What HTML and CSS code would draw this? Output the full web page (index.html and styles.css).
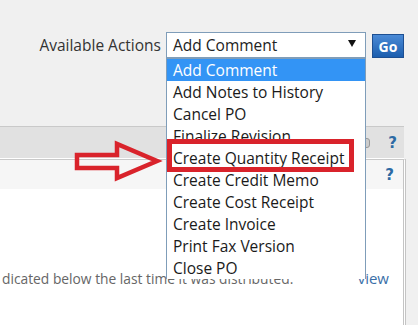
FILE: index.html
```html
<!DOCTYPE html>
<html lang="en">
<head>
    <meta charset="UTF-8">
    <title>Purchase Order</title>
    <link rel="stylesheet" href="styles.css">
</head>
<body>
    <div class="toolbar">
        <span class="toolbar-label">Available Actions</span>
        <div class="action-select">
            <span class="select-value">Add Comment</span>
            <span class="select-caret"></span>
            <ul class="select-list">
                <li class="active">Add Comment</li>
                <li>Add Notes to History</li>
                <li>Cancel PO</li>
                <li>Finalize Revision</li>
                <li>Create Quantity Receipt</li>
                <li>Create Credit Memo</li>
                <li>Create Cost Receipt</li>
                <li>Create Invoice</li>
                <li>Print Fax Version</li>
                <li>Close PO</li>
            </ul>
        </div>
        <button class="go-btn">Go</button>
    </div>

    <div class="panel">
        <div class="panel-head">
            <span class="clip-icon"></span>
            <span class="help">?</span>
        </div>
        <div class="panel-body">
            <div class="body-row">
                <span class="help">?</span>
            </div>
            <div class="notice">
                <span>dicated below the last time it was distributed.</span>
                <a class="view-link">view</a>
            </div>
        </div>
    </div>

    <svg class="callout-arrow" width="92" height="48" viewBox="0 0 92 48">
        <path d="M5 17 H45 V6 L85 23 L45 40 V30 H5 Z" fill="none" stroke="#d9232b" stroke-width="4.5" stroke-linejoin="miter"/>
    </svg>
    <div class="callout-box"></div>
</body>
</html>
```

FILE: styles.css
```css
body {
    margin: 0;
    height: 325px;
    background: #f0f0f0;
    font-family: "Open Sans", "Noto Sans", sans-serif;
    color: #222;
    overflow: hidden;
}

.toolbar {
    height: 126px;
    box-sizing: border-box;
    padding: 32px 14px 0 0;
    display: flex;
    justify-content: flex-end;
    align-items: flex-start;
}
.toolbar-label {
    font-size: 15.5px;
    color: #333;
    line-height: 26px;
    margin-right: 5px;
}

.action-select {
    position: relative;
    width: 200px;
    height: 26px;
    box-sizing: border-box;
    border: 1px solid #7f9db9;
    background: #fff;
    display: flex;
    align-items: center;
    padding-left: 6px;
    margin-right: 6px;
}
.select-value {
    font-size: 15.5px;
    flex: 1;
}
.select-caret {
    width: 0;
    height: 0;
    border-left: 4px solid transparent;
    border-right: 4px solid transparent;
    border-top: 7px solid #111;
    margin-right: 9px;
    margin-top: -4px;
}
.select-list {
    position: absolute;
    left: -1px;
    top: 25px;
    width: 200px;
    height: 221px;
    box-sizing: border-box;
    margin: 0;
    padding: 0;
    list-style: none;
    background: #fff;
    border: 1px solid #7f9db9;
    border-bottom: none;
    z-index: 2;
    overflow: hidden;
}
.select-list li {
    height: 22px;
    line-height: 22px;
    padding-left: 6px;
    font-size: 15.5px;
    color: #1a1a1a;
}
.select-list li.active {
    background: #3394f5;
    color: #fff;
}

.go-btn {
    width: 32px;
    height: 24px;
    margin-top: 2px;
    padding: 0;
    border: 1px solid #1d4f92;
    background: linear-gradient(#4a8ad6, #1c5eae);
    color: #fff;
    font-family: "Open Sans", sans-serif;
    font-weight: bold;
    font-size: 14px;
}

.panel {
    margin-right: 14px;
    border-top: 1px solid #c9c9c9;
}
.panel-head {
    height: 31px;
    background: #e1e1e1;
    border-bottom: 1px solid #fff;
    display: flex;
    align-items: center;
    justify-content: flex-end;
    padding-right: 7px;
}
.clip-icon {
    width: 5px;
    height: 8px;
    border: 1px solid #999;
    border-radius: 3px;
    background: #ccc;
    margin-right: 18px;
}
.help {
    color: #2c6aa4;
    font-weight: bold;
    font-size: 15px;
    font-family: "DejaVu Sans", sans-serif;
}

.panel-body {
    background: #fff;
    border-top: 1px solid #c9c9c9;
    border-right: 3px double #c4c4c4;
    margin-right: -2px;
    height: 165px;
}
.body-row {
    height: 29px;
    background: #f6f6f6;
    display: flex;
    align-items: center;
    justify-content: flex-end;
    padding-right: 9px;
}
.notice {
    display: flex;
    justify-content: space-between;
    align-items: center;
    margin-top: 79px;
    padding: 0 14px 0 2px;
    font-size: 13.8px;
    color: #666;
}
.view-link {
    color: #3a6fa8;
    font-size: 15px;
}

.callout-arrow {
    position: absolute;
    left: 72px;
    top: 138px;
    z-index: 3;
}
.callout-box {
    position: absolute;
    left: 167px;
    top: 139px;
    width: 177px;
    height: 23px;
    border: 5px solid #d9232b;
    z-index: 3;
}
```
